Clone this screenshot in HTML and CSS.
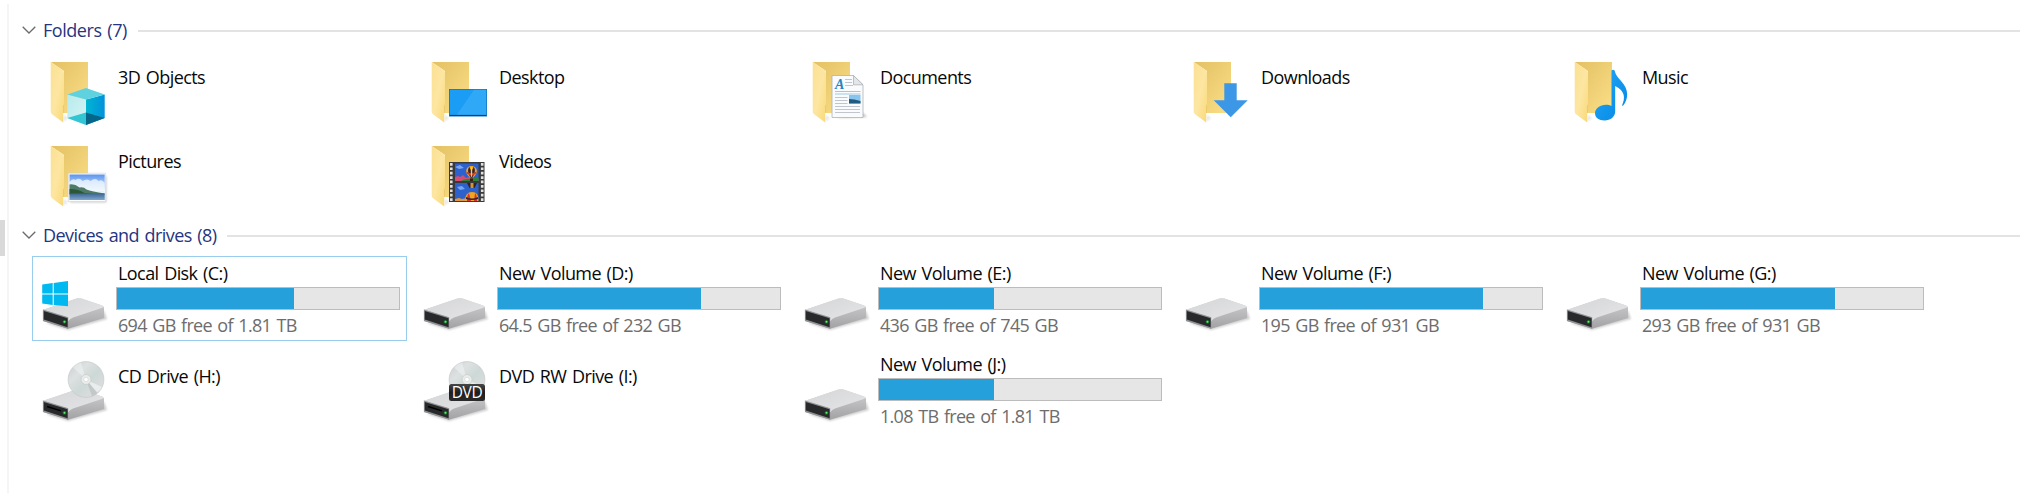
FILE: index.html
```html
<!DOCTYPE html>
<html lang="en">
<head>
  <meta charset="UTF-8">
  <title>This PC</title>
  <link rel="stylesheet" href="styles.css">
</head>
<body>
  <!-- Shared shapes used by the tiles -->
  <svg class="sprites" width="0" height="0">
    <defs>
      <linearGradient id="folder-back" x1="0" y1="0" x2="1" y2="1">
        <stop offset="0" stop-color="#e3c063"/>
        <stop offset="1" stop-color="#fbdf87"/>
      </linearGradient>
      <linearGradient id="folder-flap" x1="0" y1="0" x2="1" y2="1">
        <stop offset="0" stop-color="#fbe092"/>
        <stop offset=".5" stop-color="#fde6a2"/>
        <stop offset="1" stop-color="#f8d978"/>
      </linearGradient>
      <linearGradient id="drive-top" x1="0" y1="0" x2="1" y2="1">
        <stop offset="0" stop-color="#d4d5d7"/>
        <stop offset="1" stop-color="#e6e6e8"/>
      </linearGradient>
      <linearGradient id="drive-side" x1="0" y1="0" x2="0" y2="1">
        <stop offset="0" stop-color="#d2d2d4"/>
        <stop offset="1" stop-color="#a2a2a5"/>
      </linearGradient>
      <linearGradient id="disc" x1="0" y1="0" x2="1" y2="1">
        <stop offset="0" stop-color="#c9cdce"/>
        <stop offset=".3" stop-color="#dde1e1"/>
        <stop offset=".55" stop-color="#cdd9d6"/>
        <stop offset=".8" stop-color="#dadcdd"/>
        <stop offset="1" stop-color="#b9bcbe"/>
      </linearGradient>
      <linearGradient id="cube-left" x1="0" y1="0" x2="1" y2="1">
        <stop offset="0" stop-color="#b5ebee"/>
        <stop offset="1" stop-color="#d9f3f3"/>
      </linearGradient>
      <linearGradient id="cube-right" x1="0" y1="0" x2="1" y2="0">
        <stop offset="0" stop-color="#00b5d2"/>
        <stop offset="1" stop-color="#0092dc"/>
      </linearGradient>
      <linearGradient id="sky" x1="0" y1="0" x2="0" y2="1">
        <stop offset="0" stop-color="#5c93ee"/>
        <stop offset=".35" stop-color="#a7cbf8"/>
        <stop offset=".65" stop-color="#e6f2fb"/>
      </linearGradient>
      <linearGradient id="lake" x1="0" y1="0" x2="0" y2="1">
        <stop offset="0" stop-color="#3d668f"/>
        <stop offset="1" stop-color="#7fa8d4"/>
      </linearGradient>
      <linearGradient id="note" x1="0" y1="0" x2="1" y2="1">
        <stop offset="0" stop-color="#22a9fb"/>
        <stop offset="1" stop-color="#0586e0"/>
      </linearGradient>
      <linearGradient id="badge" x1="0" y1="0" x2="0" y2="1">
        <stop offset="0" stop-color="#474747"/>
        <stop offset=".5" stop-color="#1d1d1d"/>
        <stop offset="1" stop-color="#2c2c2c"/>
      </linearGradient>
      <filter id="soft" x="-30%" y="-30%" width="160%" height="160%">
        <feGaussianBlur stdDeviation="1.2"/>
      </filter>

      <symbol id="folder" viewBox="0 0 68 68">
        <path d="M21 62.500l5-3-4-4z" fill="#000" opacity=".1" filter="url(#soft)"/>
        <path d="M8.700 3H46v51H22V12z" fill="url(#folder-back)"/>
        <path d="M21 54v-8.500l1-1V54z" fill="#e9c767"/>
        <path d="M8.700 3L20.500 11Q22 12 22 14v31l-.8 1.500V63.500L10 55.200Q8.700 54.200 8.700 52.500z" fill="url(#folder-flap)"/>
      </symbol>

      <symbol id="drive" viewBox="0 0 68 68">
        <path d="M4 59l22 7 39-11-3-8z" fill="#000" opacity=".2" filter="url(#soft)"/>
        <path d="M1 46L34.500 34.600Q37 33.800 39.500 34.600L60 41.500Q62 42.200 62 44V54L26 64.800 1 57z" fill="url(#drive-side)"/>
        <path d="M1 45.800L34.500 34.600Q37 33.800 39.500 34.600L60 41.500Q62 42.300 60.500 43.800L31 53.500Q28 54.500 26 57.500V53.500z" fill="url(#drive-top)"/>
        <path d="M.9 45.600L26.200 53.300V64.800L.9 57z" fill="#8f9194"/>
        <path d="M1.800 46.900L25.600 54.200V63.200L1.800 55.500z" fill="#27292b"/>
        <circle cx="22.500" cy="57.800" r="1.900" fill="#146e26"/>
        <circle cx="22.500" cy="57.800" r="1" fill="#5fec6c"/>
      </symbol>

      <symbol id="disc-drive" viewBox="0 0 68 68">
        <use href="#drive" width="68" height="68"/>
        <path d="M5 51.500l14 4.400" stroke="#000" stroke-width="1.400"/>
        <circle cx="44" cy="24.500" r="17.900" fill="url(#disc)" stroke="#c2c5c6" stroke-width=".6"/>
        <path d="M44 24.500L31 12.500A17.700 17.700 0 0 1 39 7.500z" fill="#f3f5f5" opacity=".5"/>
        <path d="M44 24.500L60 32A17.700 17.700 0 0 1 55 38z" fill="#f7f8f8" opacity=".6"/>
        <path d="M44 24.500L55.500 37.800A17.700 17.700 0 0 1 50 41z" fill="#a6a9ab" opacity=".4"/>
        <circle cx="44" cy="24.500" r="5" fill="#e9eceb" stroke="#c5cac9" stroke-width=".7"/>
        <circle cx="44" cy="24.500" r="2.200" fill="#fff" stroke="#cfd3d2" stroke-width=".6"/>
      </symbol>

      <symbol id="balloon" viewBox="0 0 14 18">
        <path d="M7 0C3 0 .8 2.800.8 6c0 3 2.400 5.500 4.400 7.500h3.600c2-2 4.400-4.500 4.400-7.500C13.200 2.800 11 0 7 0z" fill="#f3a51d"/>
        <path d="M4.500 1C2 4 3 9 5.800 13.500h2.400C11 9 12 4 9.500 1 8 6 6 6 4.500 1z" fill="#322036"/>
        <path d="M1 6.500q6 4 12 0l-1 2.500q-5 3.500-10 0z" fill="#d8352a"/>
        <path d="M6.200 1.500h1.600v11H6.200z" fill="#f8d43c"/>
        <path d="M5.300 14.500h3.400v3H5.300z" fill="#3a1d12"/>
      </symbol>
    </defs>
  </svg>

  <div class="explorer">
    <div class="sidebar">
      <div class="sidebar-thumb"></div>
    </div>

    <main class="content">
      <section class="group">
        <header class="group-header">
          <svg class="chevron" viewBox="0 0 14 8"><path d="M.7.7L7 7 13.300.7"/></svg>
          <h2 class="group-title title-folders">Folders (7)</h2>
          <span class="rule"></span>
        </header>

        <div class="tiles folders">
          <div class="tile">
            <svg class="icon" viewBox="0 0 68 68">
              <use href="#folder"/>
              <path d="M25.300 35.500L44 40.500V66L25.300 59z" fill="url(#cube-left)"/>
              <path d="M62.700 35.500L44 40.500V66L62.700 59z" fill="url(#cube-right)"/>
              <path d="M44 29l18.700 6.500L44 40.500 25.300 35.500z" fill="#5fd2df"/>
              <path d="M25.300 59L44 53.500V66z" fill="#32c5d3"/>
              <path d="M62.700 59L44 53.500V66z" fill="#06668a"/>
            </svg>
            <span class="name">3D Objects</span>
          </div>

          <div class="tile">
            <svg class="icon" viewBox="0 0 68 68">
              <use href="#folder"/>
              <path d="M26 30h38v27.500H26z" fill="#1476be"/>
              <path d="M26.800 30.800h36.400v25H26.800z" fill="#1b9df5"/>
              <path d="M51 30.800h12.200v25H34z" fill="#41b0fa" opacity=".55"/>
              <path d="M26.800 56h36.400v1H26.800z" fill="#17405f"/>
            </svg>
            <span class="name">Desktop</span>
          </div>

          <div class="tile">
            <svg class="icon" viewBox="0 0 68 68">
              <use href="#folder"/>
              <path d="M31 59l32-1-4-4z" fill="#000" opacity=".25" filter="url(#soft)"/>
              <path d="M28 16.500h21.500l9.500 9.300V58.500H28z" fill="#f9fbfc" stroke="#adb3b8" stroke-width=".8"/>
              <path d="M49.500 16.500v9.300H59z" fill="#e3e7ea" stroke="#adb3b8" stroke-width=".8"/>
              <text class="doc-letter" x="31" y="30">A</text>
              <path d="M41 20.500h7M41 23.500h7M41 26.500h8M31 38.500h12.500M31 41.500h12.500M31 44.500h12.500M31 47.500h25M31 50.500h25M31 53.500h25" stroke="#b9c0c7" stroke-width=".9"/>
              <path d="M31 32.500h25.500M31 35h25.500" stroke="#9cc9e8" stroke-width="1"/>
              <path d="M45 36h11.500v8.500H45z" fill="#88c5ee"/>
              <path d="M45 40q5 0 11.500 2v2.500H45z" fill="#1f5a80"/>
            </svg>
            <span class="name">Documents</span>
          </div>

          <div class="tile">
            <svg class="icon" viewBox="0 0 68 68">
              <use href="#folder"/>
              <path d="M39.300 24.300h12.400v17h11L45.700 58.300l-17-17h10.600z" fill="#3c97e6"/>
            </svg>
            <span class="name">Downloads</span>
          </div>

          <div class="tile">
            <svg class="icon" viewBox="0 0 68 68">
              <use href="#folder"/>
              <path d="M45.500 12q0-1.200 1.600-1.200t1.800 1.500c.7 7 12.300 12.200 12.300 23 0 4.500-1.700 8.500-4 11.300q-.8.600-1.100-.4c3.200-7 3.200-14.200-6.900-19.200V52.500c0 5-4.700 9-10.700 9-5.700 0-9.500-3-9.500-7.200 0-4.700 5-8.500 11-8.500 2 0 4 .4 5.500 1.200z" fill="url(#note)"/>
            </svg>
            <span class="name">Music</span>
          </div>

          <div class="tile">
            <svg class="icon" viewBox="0 0 68 68">
              <use href="#folder"/>
              <path d="M28 33h36.500v26.500H28z" fill="#000" opacity=".2" filter="url(#soft)"/>
              <path d="M26.200 30.200h37.400v28.200H26.200z" fill="#fff" stroke="#cdd0d3" stroke-width=".6"/>
              <path d="M27.500 31.500h35.200v25.600H27.500z" fill="url(#sky)"/>
              <path d="M27.500 39q3-4 6-2 4-3 7 1 5-3 8 0 5-4 8 0 4-2 6 2v8H27.500z" fill="#f4f9fe" opacity=".75"/>
              <path d="M27.500 41.500q5-1 10 3 4-1 7 2 5 2 18.200 4v1H27.500z" fill="#4d7b65"/>
              <path d="M27.500 46q9 0 15 4l8 1H27.500z" fill="#2d573b"/>
              <path d="M27.500 50.500h35.200v6.600H27.500z" fill="url(#lake)"/>
            </svg>
            <span class="name">Pictures</span>
          </div>

          <div class="tile">
            <svg class="icon" viewBox="0 0 68 68">
              <use href="#folder"/>
              <path d="M26 19h35.500v40H26z" fill="#3a3a3c"/>
              <path d="M28.300 20v38M59.200 20v38" stroke="#e2e0dc" stroke-width="2.600" stroke-dasharray="2.700 1.700"/>
              <path d="M32 20.500h23.500V38H32z" fill="#2c61ce"/>
              <path d="M32 40h23.500v18H32z" fill="#2c61ce"/>
              <path d="M32 34l3-1 2 1 3-2 3 3 3-1 9.500 2v2H32z" fill="#d54d70"/>
              <path d="M41 36.500l14.500-2V38H38z" fill="#2a8437"/>
              <path d="M32 24l5-2 4 3-5 1zM34 44l5-1 3 3-5 1z" fill="#77a5ee"/>
              <path d="M32 56l4-1 3 1 5-1v3H32z" fill="#e29839"/>
              <use href="#balloon" x="41.500" y="23" width="14" height="15.500"/>
              <path d="M44 40h10l-2.500 5h-5z" fill="#2f2029"/>
              <path d="M47.500 40h3v5h-3z" fill="#d3952e"/>
              <path d="M42 58q0-9 7-9t6.500 9z" fill="#f3a51d"/>
              <path d="M44 58q0-7 2-8l2 8zM51 58l1-8q2 2 2 8z" fill="#d8352a"/>
              <path d="M43 54q6 3 12 0v2q-6 2-12 0z" fill="#37213a"/>
            </svg>
            <span class="name">Videos</span>
          </div>
        </div>
      </section>

      <section class="group">
        <header class="group-header">
          <svg class="chevron" viewBox="0 0 14 8"><path d="M.7.7L7 7 13.300.7"/></svg>
          <h2 class="group-title title-drives">Devices and drives (8)</h2>
          <span class="rule"></span>
        </header>

        <div class="tiles drives">
          <div class="tile selected">
            <svg class="icon" viewBox="0 0 68 68">
              <use href="#drive"/>
              <path d="M.2 20.600L10.700 19v10.600H.2zM11.700 18.900L26 17v12.600H11.700zM.2 30.600h10.500v10.500L.2 39.500zM11.700 30.600H26V42.200l-14.300-1.100z" fill="#00b9f1"/>
            </svg>
            <div class="details">
              <span class="name">Local Disk (C:)</span>
              <div class="bar"><div class="bar-fill" style="width: 62.8%"></div></div>
              <span class="space">694 GB free of 1.81 TB</span>
            </div>
          </div>

          <div class="tile">
            <svg class="icon" viewBox="0 0 68 68"><use href="#drive"/></svg>
            <div class="details">
              <span class="name">New Volume (D:)</span>
              <div class="bar"><div class="bar-fill" style="width: 72%"></div></div>
              <span class="space">64.5 GB free of 232 GB</span>
            </div>
          </div>

          <div class="tile">
            <svg class="icon" viewBox="0 0 68 68"><use href="#drive"/></svg>
            <div class="details">
              <span class="name">New Volume (E:)</span>
              <div class="bar"><div class="bar-fill" style="width: 40.8%"></div></div>
              <span class="space">436 GB free of 745 GB</span>
            </div>
          </div>

          <div class="tile">
            <svg class="icon" viewBox="0 0 68 68"><use href="#drive"/></svg>
            <div class="details">
              <span class="name">New Volume (F:)</span>
              <div class="bar"><div class="bar-fill" style="width: 79.1%"></div></div>
              <span class="space">195 GB free of 931 GB</span>
            </div>
          </div>

          <div class="tile">
            <svg class="icon" viewBox="0 0 68 68"><use href="#drive"/></svg>
            <div class="details">
              <span class="name">New Volume (G:)</span>
              <div class="bar"><div class="bar-fill" style="width: 68.8%"></div></div>
              <span class="space">293 GB free of 931 GB</span>
            </div>
          </div>

          <div class="tile">
            <svg class="icon" viewBox="0 0 68 68"><use href="#disc-drive"/></svg>
            <div class="details no-media">
              <span class="name">CD Drive (H:)</span>
            </div>
          </div>

          <div class="tile">
            <svg class="icon" viewBox="0 0 68 68">
              <use href="#disc-drive"/>
              <rect x="26" y="29" width="36" height="17" rx="2.500" fill="url(#badge)"/>
              <text class="dvd-text" x="44" y="43">DVD</text>
            </svg>
            <div class="details no-media">
              <span class="name">DVD RW Drive (I:)</span>
            </div>
          </div>

          <div class="tile">
            <svg class="icon" viewBox="0 0 68 68"><use href="#drive"/></svg>
            <div class="details">
              <span class="name">New Volume (J:)</span>
              <div class="bar"><div class="bar-fill" style="width: 40.8%"></div></div>
              <span class="space">1.08 TB free of 1.81 TB</span>
            </div>
          </div>
        </div>
      </section>
    </main>
  </div>
</body>
</html>
```

FILE: styles.css
```css
* {
  box-sizing: border-box;
}

body {
  margin: 0;
  background: #fff;
  color: #080808;
  font-family: "Open Sans", "Noto Sans", sans-serif;
  font-size: 18px;
  line-height: 24px;
  letter-spacing: -.57px;
  word-spacing: 1.5px;
}

.sprites {
  display: block;
}

.explorer {
  display: flex;
  height: 493px;
  overflow: hidden;
}

.sidebar {
  width: 9px;
  margin-top: 4px;
  padding-top: 216px;
  border-right: 2px solid #f5f5f5;
}

.sidebar-thumb {
  width: 5px;
  height: 36px;
  background: #d9d9d9;
}

.content {
  flex: 1;
  padding: 18px 0 0 13px;
}

.group-header {
  display: flex;
  align-items: center;
  height: 26px;
}

.chevron {
  width: 14px;
  height: 8px;
  margin-top: -3px;
  fill: none;
  stroke: #6b6b6b;
  stroke-width: 1.3;
}

.group-title {
  margin: -2px 0 0 7px;
  color: #26357f;
  font-size: 18px;
  font-weight: 400;
  white-space: nowrap;
}

.title-folders {
  width: 95px;
  letter-spacing: -.45px;
}

.title-drives {
  width: 184px;
}

.rule {
  flex: 1;
  height: 2px;
  background: #e3e3e3;
}

.tiles {
  display: grid;
  grid-template-columns: repeat(5, 375px);
  gap: 6px;
  margin-left: 10px;
}

.folders {
  grid-auto-rows: 78px;
  padding: 10px 0 7px;
}

.drives {
  grid-auto-rows: 85px;
  padding-top: 7px;
}

.tile {
  display: flex;
  border: 1px solid transparent;
}

.selected {
  border-color: #99cdee;
}

.icon {
  flex: none;
  width: 68px;
  height: 68px;
  margin-left: 9px;
}

.folders .icon {
  margin-top: 4px;
}

.drives .icon {
  margin-top: 7px;
}

.folders .name {
  margin: 10px 0 0 8px;
}

.name,
.space {
  white-space: nowrap;
}

.details {
  display: flex;
  flex-direction: column;
  width: 284px;
  margin-left: 6px;
  padding-top: 4px;
}

.details .name,
.details .space {
  padding-left: 2px;
}

.no-media {
  padding-top: 16px;
}

.bar {
  height: 23px;
  margin: 2px 0 3px;
  border: 1px solid #bcbcbc;
  background: #e6e6e6;
}

.bar-fill {
  height: 100%;
  background: #26a0da;
}

.space {
  color: #6d6d6d;
  letter-spacing: -.7px;
}

.doc-letter {
  fill: #1d86c8;
  font: italic bold 14px "Liberation Serif", serif;
}

.dvd-text {
  fill: #fff;
  font: 15.5px "Open Sans", sans-serif;
  letter-spacing: -.4px;
  text-anchor: middle;
}
```
